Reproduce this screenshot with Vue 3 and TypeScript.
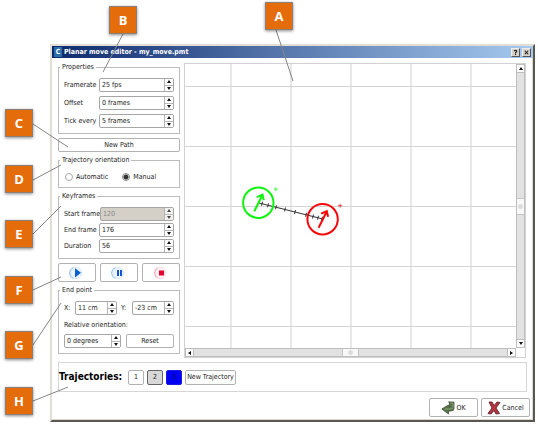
<script setup lang="ts">
import { ref } from 'vue'

interface Field { id: string; label: string; value: string; disabled?: boolean }
interface Callout { letter: string; x: number; y: number; line: [number, number, number, number] }

const properties = ref<Field[]>([
  { id: 'framerate', label: 'Framerate', value: '25 fps' },
  { id: 'offset', label: 'Offset', value: '0 frames' },
  { id: 'tick', label: 'Tick every', value: '5 frames' },
])
const keyframes = ref<Field[]>([
  { id: 'start', label: 'Start frame', value: '120', disabled: true },
  { id: 'end', label: 'End frame', value: '176' },
  { id: 'duration', label: 'Duration', value: '56' },
])
const orientation = ref('manual')
const pointX = ref('11 cm')
const pointY = ref('-23 cm')
const relative = ref('0 degrees')
const ticks = [3, 9, 17, 26, 36, 47, 54, 59, 63]

const callouts: Callout[] = [
  { letter: 'A', x: 265, y: 2, line: [276, 30, 293, 81] },
  { letter: 'B', x: 109, y: 6, line: [123, 34, 103, 72] },
  { letter: 'C', x: 5, y: 109, line: [33, 124, 68, 147] },
  { letter: 'D', x: 5, y: 165, line: [33, 180, 61, 165] },
  { letter: 'E', x: 5, y: 220, line: [33, 234, 61, 206] },
  { letter: 'F', x: 5, y: 276, line: [33, 290, 61, 277] },
  { letter: 'G', x: 5, y: 331, line: [33, 345, 61, 303] },
  { letter: 'H', x: 5, y: 387, line: [33, 401, 68, 387] },
]
</script>

<template>
  <div class="stage">
    <section class="window">
      <header class="titlebar">
        <span class="logo">C</span>
        <h1>Planar move editor - my_move.pmt</h1>
        <button class="caption" aria-label="Help">
          <svg viewBox="0 0 8 7"><path d="M2.5 2.2Q2.5 1 4 1T5.5 2.2Q5.500 3 4 3.600V4.500M4 5.300V6.300" /></svg>
        </button>
        <button class="caption" aria-label="Close">
          <svg viewBox="0 0 8 7"><path d="M2 1.500L6 5.500M6 1.500L2 5.500" /></svg>
        </button>
      </header>

      <div class="main">
        <div class="side">
          <fieldset class="props">
            <legend>Properties</legend>
            <div v-for="f in properties" :key="f.id" class="row">
              <label :for="f.id">{{ f.label }}</label>
              <span class="spin">
                <input :id="f.id" v-model="f.value" type="text" />
                <span class="steps"><button class="up" aria-label="Increase" /><button class="down" aria-label="Decrease" /></span>
              </span>
            </div>
          </fieldset>

          <button class="btn path">New Path</button>

          <fieldset class="orient">
            <legend>Trajectory orientation</legend>
            <div class="radios">
              <label><input v-model="orientation" type="radio" value="automatic" name="orientation" />Automatic</label>
              <label><input v-model="orientation" type="radio" value="manual" name="orientation" />Manual</label>
            </div>
          </fieldset>

          <fieldset class="keys">
            <legend>Keyframes</legend>
            <div v-for="f in keyframes" :key="f.id" class="row">
              <label :for="f.id">{{ f.label }}</label>
              <span class="spin" :class="{ off: f.disabled }">
                <input :id="f.id" v-model="f.value" type="text" :disabled="f.disabled" />
                <span class="steps"><button class="up" aria-label="Increase" :disabled="f.disabled" /><button class="down" aria-label="Decrease" :disabled="f.disabled" /></span>
              </span>
            </div>
          </fieldset>

          <div class="player">
            <button class="btn" aria-label="Play">
              <svg viewBox="0 0 16 14">
                <circle class="disc blue" cx="7" cy="7" r="5.500" /><path class="halo-blue" d="M4.500 1.500A5.800 5.800 0 0 0 4.500 12.500" />
                <path class="play" d="M6 2.200L12 6.800L6 11.400Z" />
              </svg>
            </button>
            <button class="btn" aria-label="Pause">
              <svg viewBox="0 0 16 14">
                <circle class="disc blue" cx="7.500" cy="7" r="5.500" /><path class="halo-blue" d="M4.500 1.500A5.800 5.800 0 0 0 4.500 12.500" />
                <path class="pause" d="M6 4h2v6H6zM9 4h2v6H9z" />
              </svg>
            </button>
            <button class="btn" aria-label="Stop">
              <svg viewBox="0 0 16 14">
                <circle class="disc red" cx="7.500" cy="7" r="5.500" /><path class="halo-red" d="M4.500 2A5.800 5.800 0 0 0 4.500 12" />
                <path class="stop" d="M6 4.500h5v5H6z" />
              </svg>
            </button>
          </div>

          <fieldset class="point">
            <legend>End point</legend>
            <div class="pair">
              <label for="px">X:</label>
              <span class="spin">
                <input id="px" v-model="pointX" type="text" />
                <span class="steps"><button class="up" aria-label="Increase" /><button class="down" aria-label="Decrease" /></span>
              </span>
              <label for="py">Y:</label>
              <span class="spin">
                <input id="py" v-model="pointY" type="text" />
                <span class="steps"><button class="up" aria-label="Increase" /><button class="down" aria-label="Decrease" /></span>
              </span>
            </div>
            <label class="rel" for="rel">Relative orientation:</label>
            <div class="reset">
              <span class="spin">
                <input id="rel" v-model="relative" type="text" />
                <span class="steps"><button class="up" aria-label="Increase" /><button class="down" aria-label="Decrease" /></span>
              </span>
              <button class="btn">Reset</button>
            </div>
          </fieldset>
        </div>

        <div class="view">
          <div class="plot">
            <svg width="100%" height="100%">
              <defs>
                <pattern id="grid" x="45" y="22" width="60" height="60" patternUnits="userSpaceOnUse">
                  <rect width="2" height="60" fill="#e8e8e8" />
                  <rect width="60" height="1" fill="#d4d4d4" />
                </pattern>
              </defs>
              <rect width="100%" height="100%" fill="url(#grid)" />
              <g transform="translate(74 139)" class="track-line">
                <path d="M0 0L64 16" />
                <path v-for="t in ticks" :key="t" :d="`M${t + 0.5} ${t / 4 - 2}L${t - 0.5} ${t / 4 + 2}`" />
              </g>
              <g class="node green" transform="translate(73.300 138.700)">
                <circle r="15.200" /><path d="M-4 8.500L4 -7.500M-1.500 -5.500L4.200 -8L5.500 -2.500" />
                <path class="plus" d="M15.500 -13.500h4M17.500 -15.500v4" />
              </g>
              <g class="node crimson" transform="translate(137.600 155.200)">
                <circle r="15.200" /><path d="M-4 8.500L4 -7.500M-1.500 -5.500L4.200 -8L5.500 -2.500" />
                <path class="plus" d="M15.500 -13.500h4M17.500 -15.500v4" />
              </g>
            </svg>
          </div>
          <div class="bar vertical">
            <button class="up" aria-label="Scroll up" /><i /><span class="thumb" /><i /><button class="down" aria-label="Scroll down" />
          </div>
          <div class="bar horizontal">
            <button class="left" aria-label="Scroll left" /><i /><span class="thumb" /><i /><button class="right" aria-label="Scroll right" />
          </div>
        </div>
      </div>

      <div class="trajectories">
        <h2>Trajectories:</h2>
        <button class="btn num">1</button>
        <button class="btn num current">2</button>
        <button class="btn num filled">3</button>
        <button class="btn new">New Trajectory</button>
      </div>

      <footer>
        <button class="btn">
          <svg viewBox="0 0 14 14"><path d="M7.500 1H13V7.500Q13 10 10 10H7.500V13L.8 8L7.500 4V6.500H8.500V1Z" fill="#58764a" stroke="#3c4f35" stroke-width=".8" /><path d="M9.500 2H12V6.500Q12 8 10 8H4" fill="none" stroke="#86a077" /></svg>OK
        </button>
        <button class="btn">
          <svg viewBox="0 0 14 14"><path d="M2 1L5 1L7.200 4.500L10 1L13 1.500L9 7L12.500 12.500L9 13L7 9.500L4 13L1 12.500L5 7Z" fill="#b8343e" stroke="#5e252b" stroke-width=".9" /></svg>Cancel
        </button>
      </footer>
    </section>

    <svg class="leaders">
      <line v-for="c in callouts" :key="c.letter" :x1="c.line[0]" :y1="c.line[1]" :x2="c.line[2]" :y2="c.line[3]" />
    </svg>
    <span v-for="c in callouts" :key="c.letter" class="callout" :style="{ left: c.x + 'px', top: c.y + 'px' }">{{ c.letter }}</span>
  </div>
</template>

<style>
body { background: #fff; }
</style>

<style scoped>
* { box-sizing: border-box; }
.stage {
  position: relative;
  padding: 44px 3px 5px 50px;
  font: 7px/8px "DejaVu Sans Condensed", "DejaVu Sans", sans-serif;
  color: #222;
}
.window {
  background: #fff;
  border: 2px solid #e2ded5;
  border-right: 2px solid #595953;
  border-bottom: 2px solid #595953;
  box-shadow: inset -1px -1px #dcd8ce;
}
button, input { font: inherit; color: inherit; margin: 0; padding: 0; }
.titlebar {
  display: flex;
  align-items: center;
  gap: 2px;
  height: 12px;
  padding: 0 2px;
  color: #fff;
  background: linear-gradient(90deg, #0d2a6e, #a6caf0);
}
.logo {
  width: 8px;
  height: 10px;
  background: #2d6ea6;
  font-weight: bold;
  line-height: 10px;
  text-align: center;
}
h1 { flex: 1; margin: 0; font-size: 7px; line-height: 10px; font-weight: bold; }
.caption {
  display: flex;
  width: 9px;
  height: 9px;
  background: #d6d2ca;
  border: 1px solid #eee;
  border-right-color: #555;
  border-bottom-color: #555;
}
.caption svg { width: 100%; height: 100%; fill: none; stroke: #111; stroke-width: 1.2; }
.main { display: flex; gap: 4px; padding: 5px 7px 4px 6px; }
.side { display: flex; flex-direction: column; gap: 4px; flex: 0 0 122px; padding-bottom: 4px; }
fieldset { min-width: 0; margin: 0; padding: 7px 5px 5px; border: 1px solid #bcbcbc; }
legend { margin-left: -4px; padding: 0 2px; line-height: 8px; }
.props, .keys { display: flex; flex-direction: column; gap: 4px; }
.keys { gap: 2px; }
.row { display: flex; align-items: center; height: 14px; }
.row label { flex: 0 0 35px; white-space: nowrap; }
.spin {
  display: flex;
  flex: 1;
  min-width: 0;
  height: 14px;
  border: 1px solid #a6a6a6;
  border-radius: 2px;
  background: #fff;
  overflow: hidden;
}
.spin input { flex: 1; min-width: 0; width: 0; padding-left: 2px; border: 0; background: none; outline: 0; }
.steps { display: flex; flex-direction: column; flex: 0 0 9px; border-left: 1px solid #b5b5b5; }
.steps button, .bar button {
  display: flex;
  flex: 1;
  align-items: center;
  justify-content: center;
  border: 0;
  background: #fff;
}
.steps button + button { border-top: 1px solid #b5b5b5; }
.up::before, .down::before { content: ""; border: 2px solid transparent; }
.up::before { border-top: 0; border-bottom: 3px solid #111; }
.down::before { border-bottom: 0; border-top: 3px solid #111; }
.off { background: #d4d0c8; color: #888; }
.off button { opacity: .7; }
.btn {
  display: flex;
  align-items: center;
  justify-content: center;
  height: 14px;
  background: #fff;
  border: 1px solid #b2b2b2;
  border-radius: 2px;
  white-space: nowrap;
}
.orient { padding-top: 8px; }
.radios { display: flex; gap: 14px; height: 10px; padding-left: 1px; }
.radios label { display: flex; align-items: center; gap: 3px; }
.radios input {
  appearance: none;
  width: 8px;
  height: 8px;
  border: 1px solid #aaa;
  border-radius: 50%;
  background: #fff;
}
.radios input:checked { background: radial-gradient(circle, #333 0 2px, #fff 3px); border-color: #888; }
.player { display: grid; grid-template-columns: repeat(3, 1fr); gap: 4px; }
.player .btn { height: 19px; }
.player svg { width: 16px; height: 14px; }
.disc { stroke-width: 1; }
.blue { fill: #edf5ff; stroke: #d5e7fc; }
.red { fill: #fff1f4; stroke: #fadbe2; }
.halo-blue { fill: none; stroke: #91bdf2; }
.halo-red { fill: none; stroke: #f3a0b2; }
.play { fill: #075fd0; }
.pause { fill: #1753d4; }
.stop { fill: #e4002c; }
.pair, .reset { display: flex; align-items: center; }
.pair label { flex: 0 0 11px; }
.pair .spin + label { flex-basis: 15px; padding-left: 4px; }
.rel { display: block; padding: 6px 0 5px; }
.reset { gap: 5px; }
.reset .btn { flex: 0 0 48px; }
.view {
  display: grid;
  flex: 1;
  min-width: 0;
  grid-template: 1fr 9px / 1fr 9px;
  border: 1px solid #d2d2d2;
}
.plot { position: relative; min-width: 0; }
.plot svg { position: absolute; inset: 0; }
.track-line { fill: none; stroke: #333; stroke-width: 1; }
.node { fill: none; stroke-width: 2; }
.green { stroke: #0cf40c; }
.crimson { stroke: #f40808; }
.plus { stroke-width: 1; opacity: .7; }
.bar { display: flex; background: #e2e2e2; border: 0 solid #bebebe; }
.bar i { flex: 1; }
.bar button { flex: 0 0 9px; border: 1px solid #bebebe; }
.vertical { flex-direction: column; border-width: 0 1px; }
.vertical button { border-width: 1px 0; }
.horizontal { border-width: 1px 0; }
.horizontal button { border-width: 0 1px; }
.thumb {
  flex: 0 0 17px;
  border: 1px solid #c4c4c4;
  background: radial-gradient(circle, #ddd 0 2px, #f9f9f9 3px);
}
.vertical .thumb { border-width: 1px 0; }
.horizontal .thumb { border-width: 0 1px; }
.left::before, .right::before { content: ""; border: 2px solid transparent; }
.left::before { border-left: 0; border-right: 3px solid #111; }
.right::before { border-right: 0; border-left: 3px solid #111; }
.trajectories {
  display: flex;
  align-items: center;
  gap: 3px;
  height: 30px;
  margin: 0 6px;
  border: 1px solid #d6d6d6;
}
h2 { margin: 0 3px 0 0; font-size: 10px; line-height: 12px; font-weight: bold; color: #000; }
.num { width: 16px; height: 15px; }
.new { height: 15px; padding: 0 1px; }
.current { background: #d8d8d8; border-color: #666; }
.filled { background: #0000f5; border-color: #1c1ce0; color: #000050; }
footer { display: flex; justify-content: flex-end; gap: 3px; padding: 6px 3px 3px; }
footer .btn { width: 49px; height: 19px; gap: 1px; }
footer svg { width: 14px; height: 14px; }
.leaders { position: absolute; inset: 0; width: 100%; height: 100%; pointer-events: none; }
.leaders line { stroke: #858585; stroke-width: 1; }
.callout {
  position: absolute;
  width: 28px;
  height: 28px;
  border: 1px solid #8a8078;
  background: #e46c0a;
  box-shadow: 0 1px 3px #0007;
  color: #fff;
  font: bold 13px/26px "Open Sans", sans-serif;
  text-align: center;
}
</style>
